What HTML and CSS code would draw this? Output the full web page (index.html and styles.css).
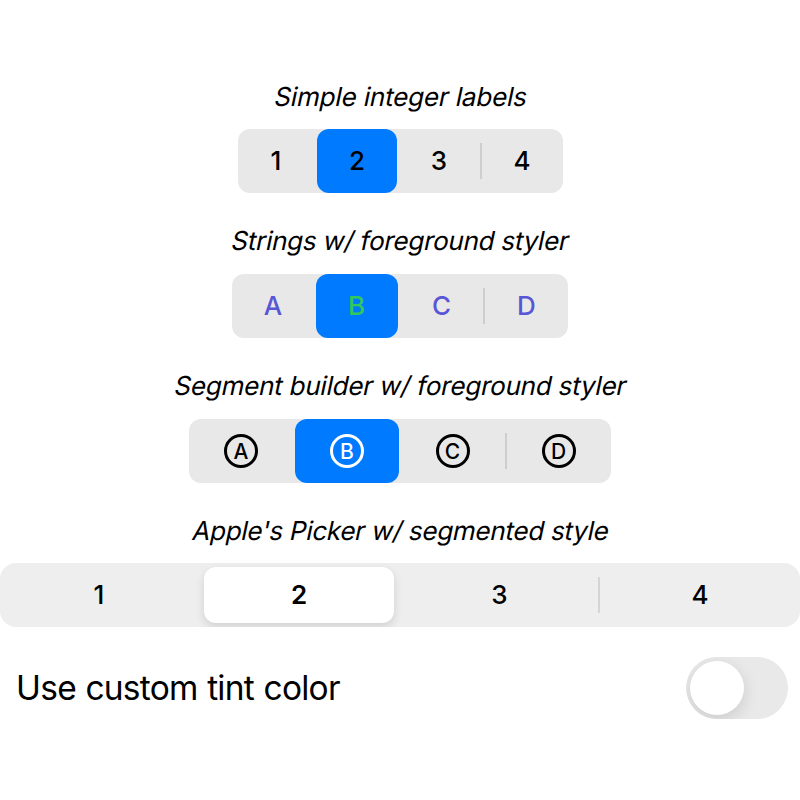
FILE: index.html
```html
<!DOCTYPE html>
<html lang="en">
<head>
<meta charset="utf-8">
<title>Segmented Picker</title>
<link rel="stylesheet" href="styles.css">
</head>
<body>
<main class="screen">
  <section class="group">
    <h2 class="label label-simple"><span>Simple integer labels</span></h2>
    <div class="picker picker-int">
      <span class="seg">1</span><span class="seg selected">2</span><span class="seg">3</span><span class="seg divided">4</span>
    </div>
  </section>
  <section class="group">
    <h2 class="label label-strings"><span>Strings w/ foreground styler</span></h2>
    <div class="picker picker-str">
      <span class="seg">A</span><span class="seg selected">B</span><span class="seg">C</span><span class="seg divided">D</span>
    </div>
  </section>
  <section class="group">
    <h2 class="label label-builder"><span>Segment builder w/ foreground styler</span></h2>
    <div class="picker picker-circle">
      <span class="seg"><b class="ring">A</b></span><span class="seg selected"><b class="ring">B</b></span><span class="seg"><b class="ring">C</b></span><span class="seg divided"><b class="ring">D</b></span>
    </div>
  </section>
  <section class="group">
    <h2 class="label label-apple"><span>Apple's Picker w/ segmented style</span></h2>
    <div class="picker picker-apple">
      <span class="seg">1</span><span class="seg selected">2</span><span class="seg">3</span><span class="seg divided">4</span>
    </div>
  </section>
  <div class="toggle-row">
    <span class="toggle-label">Use custom tint color</span>
    <span class="switch"><i class="knob"></i></span>
  </div>
</main>
</body>
</html>
```
FILE: styles.css
```css
* { box-sizing: border-box; }
body {
  margin: 0;
  background: #fff;
  color: #000;
  font-family: Inter, "Liberation Sans", sans-serif;
}
.screen {
  width: 800px;
  height: 800px;
  padding-top: 81px;
  overflow: hidden;
}
.group {
  display: flex;
  flex-direction: column;
  align-items: center;
  height: 145px;
}
.label {
  margin: 0 0 16px;
  height: 32px;
  padding-left: 2px;
  font-size: 26px;
  line-height: 32px;
  font-weight: 400;
  white-space: nowrap;
  letter-spacing: -0.27px;
}
.label span {
  display: block;
  transform: skewX(-12deg);
}
.label-simple { letter-spacing: -0.16px; }
.label-strings, .label-builder, .label-apple { line-height: 30px; }
.label-strings { padding-left: 1px; }
.label-builder { letter-spacing: -0.22px; padding-left: 1px; }
.picker {
  display: grid;
  height: 64px;
  border-radius: 12px;
  background: #e8e8e8;
  font-size: 26px;
  font-weight: 500;
}
.picker-int { width: 325px; grid-template-columns: 79px 80px 84px 82px; }
.picker-str { width: 336px; grid-template-columns: 84px 82px 86px 84px; color: #5856d6; }
.picker-circle { width: 422px; grid-template-columns: 106px 104px 107px 105px; }
.seg {
  display: flex;
  align-items: center;
  justify-content: center;
  position: relative;
}
.picker-int .seg, .picker-str .seg { padding-bottom: 1px; }
.picker-int .seg:first-child, .picker-str .seg:first-child, .picker-circle .seg:first-child { padding-right: 2px; }
.picker-int .seg:nth-child(n+2) { padding-left: 1px; }
.picker-str .divided, .picker-str .seg:nth-child(3) { padding-left: 1px; }
.selected {
  background: #007aff;
  border-radius: 12px;
}
.picker-str .selected { color: #34c759; padding-right: 1px; }
.picker-circle .selected { color: #fff; }
.divided::before {
  content: "";
  position: absolute;
  left: -1px;
  top: 14px;
  width: 2px;
  height: 36px;
  background: #cecece;
}
.ring {
  display: flex;
  align-items: center;
  justify-content: center;
  width: 34px;
  height: 34px;
  border: 3px solid currentColor;
  border-radius: 50%;
  font-size: 21px;
  font-weight: 550;
}
.picker-apple {
  width: 800px;
  margin-top: -1px;
  grid-template-columns: 198px 202px 199px 201px;
  border-radius: 16px;
  background: #eeeeee;
}
.picker-apple .seg { padding-bottom: 1px; }
.picker-apple .divided { padding-left: 1px; }
.picker-apple .selected {
  margin: 4px 6px;
  background: #fff;
  box-shadow: 0 4px 10px rgba(0, 0, 0, .12);
  clip-path: inset(-4px -16px -4px -16px);
  font-weight: 600;
}
.picker-apple .divided::before { background: #d5d5d6; }
.toggle-row {
  display: flex;
  align-items: center;
  justify-content: space-between;
  height: 62px;
  margin-top: -4px;
  padding: 0 12px 0 16px;
}
.toggle-label { font-size: 33.5px; letter-spacing: -0.74px; word-spacing: 0.8px; }
.switch {
  width: 102px;
  height: 62px;
  padding: 4px;
  border-radius: 31px;
  background: #e9e9ea;
  overflow: hidden;
}
.knob {
  display: block;
  width: 54px;
  height: 54px;
  border-radius: 50%;
  background: #fff;
  box-shadow: 0 5px 16px rgba(0, 0, 0, .13);
}
```
